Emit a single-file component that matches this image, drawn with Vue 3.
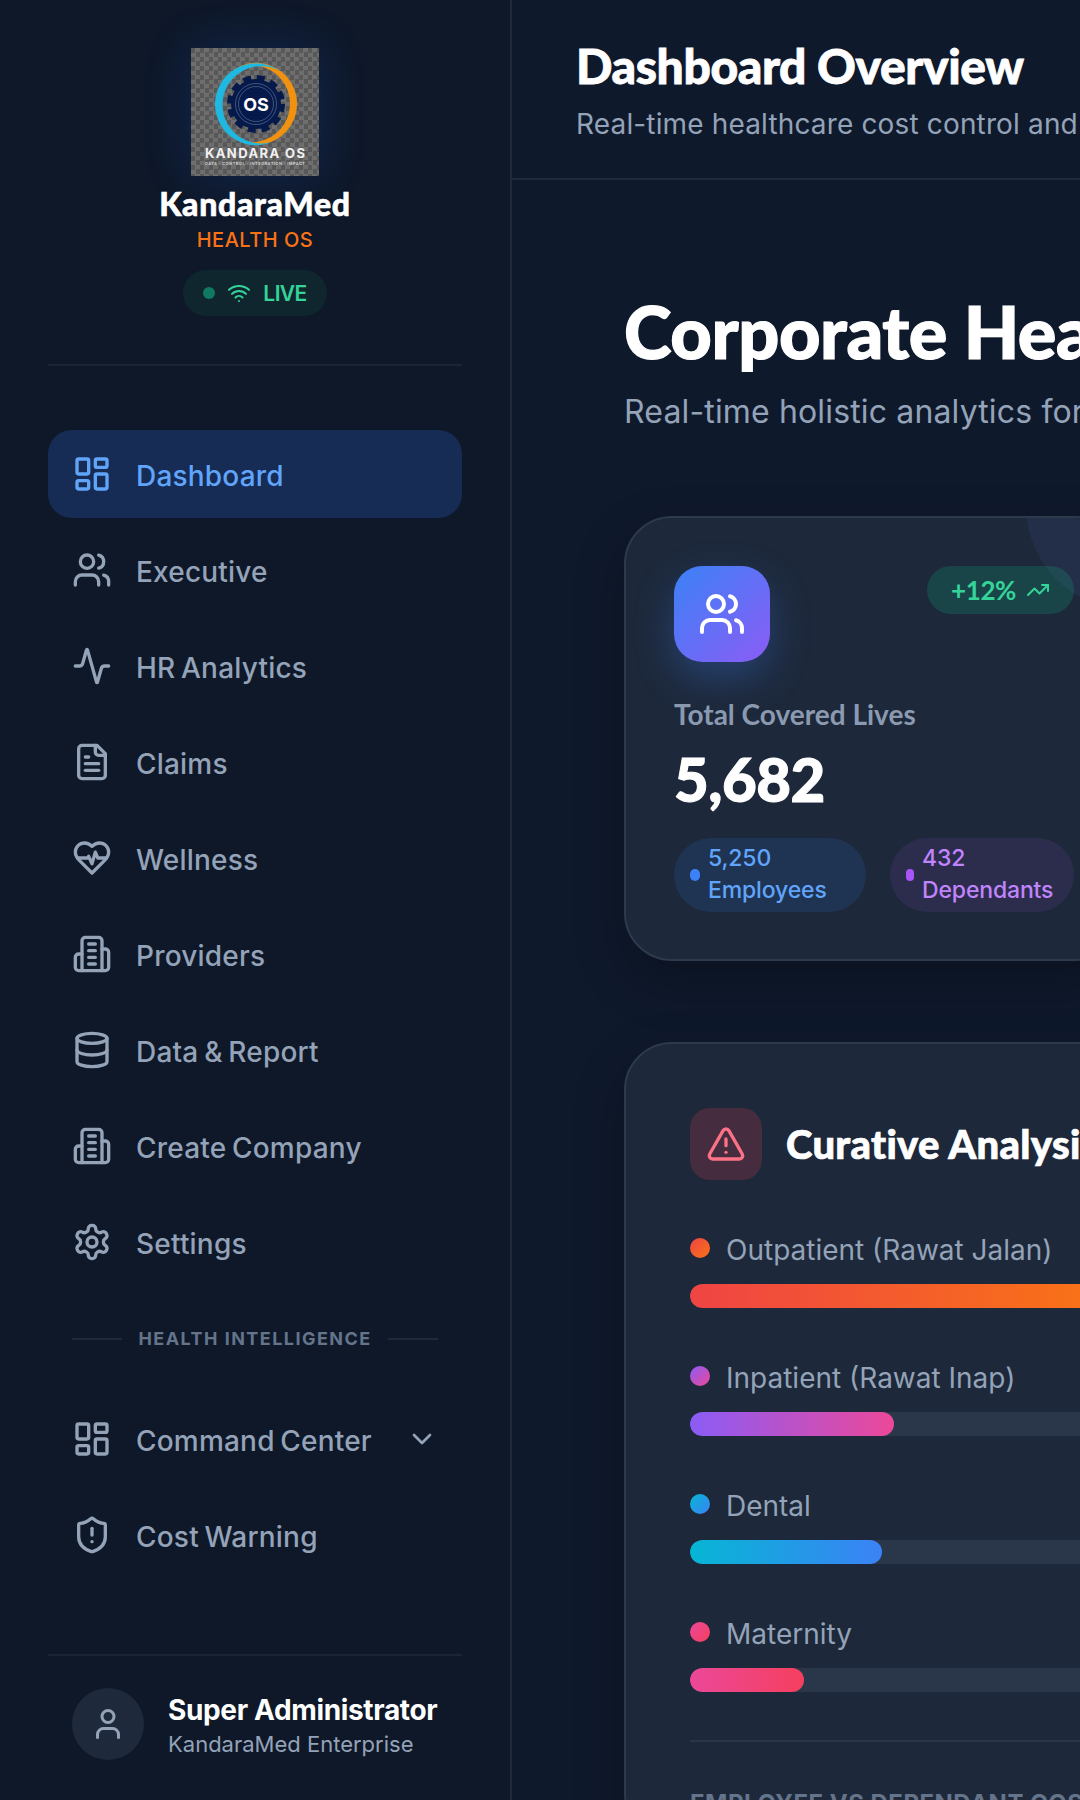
<script setup>
// icon paths, same 24x24 grid for all of them
const icons = {
  dashboard: { rects: [[3, 3, 7, 9], [14, 3, 7, 5], [14, 12, 7, 9], [3, 16, 7, 5]] },
  users: { circles: [[9, 7, 4]], paths: ['M16 21v-2a4 4 0 0 0-4-4H6a4 4 0 0 0-4 4v2', 'M22 21v-2a4 4 0 0 0-3-3.87', 'M16 3.13a4 4 0 0 1 0 7.75'] },
  activity: { paths: ['M22 12h-2.48a2 2 0 0 0-1.93 1.46l-2.35 8.36a.25.25 0 0 1-.48 0L9.24 2.18a.25.25 0 0 0-.48 0l-2.35 8.36A2 2 0 0 1 4.49 12H2'] },
  file: { paths: ['M15 2H6a2 2 0 0 0-2 2v16a2 2 0 0 0 2 2h12a2 2 0 0 0 2-2V7Z', 'M14 2v4a2 2 0 0 0 2 2h4', 'M10 9H8', 'M16 13H8', 'M16 17H8'] },
  heart: { paths: ['M19 14c1.49-1.46 3-3.21 3-5.5A5.5 5.5 0 0 0 16.5 3c-1.76 0-3 .5-4.5 2-1.5-1.5-2.74-2-4.5-2A5.5 5.5 0 0 0 2 8.5c0 2.3 1.5 4.05 3 5.5l7 7Z', 'M3.22 12H9.5l.5-1 2 4.5 2-7 1.5 3.5h5.27'] },
  building: { paths: ['M6 22V4a2 2 0 0 1 2-2h8a2 2 0 0 1 2 2v18Z', 'M6 12H4a2 2 0 0 0-2 2v6a2 2 0 0 0 2 2h2', 'M18 9h2a2 2 0 0 1 2 2v9a2 2 0 0 1-2 2h-2', 'M10 6h4', 'M10 10h4', 'M10 14h4', 'M10 18h4'] },
  database: { paths: ['M3 5a9 3 0 1 0 18 0a9 3 0 1 0-18 0', 'M3 5V19A9 3 0 0 0 21 19V5', 'M3 12A9 3 0 0 0 21 12'] },
  settings: { circles: [[12, 12, 3]], paths: ['M12.22 2h-.44a2 2 0 0 0-2 2v.18a2 2 0 0 1-1 1.73l-.43.25a2 2 0 0 1-2 0l-.15-.08a2 2 0 0 0-2.73.73l-.22.38a2 2 0 0 0 .73 2.73l.15.1a2 2 0 0 1 1 1.72v.51a2 2 0 0 1-1 1.74l-.15.09a2 2 0 0 0-.73 2.73l.22.38a2 2 0 0 0 2.73.73l.15-.08a2 2 0 0 1 2 0l.43.25a2 2 0 0 1 1 1.73V20a2 2 0 0 0 2 2h.44a2 2 0 0 0 2-2v-.18a2 2 0 0 1 1-1.73l.43-.25a2 2 0 0 1 2 0l.15.08a2 2 0 0 0 2.73-.73l.22-.39a2 2 0 0 0-.73-2.73l-.15-.08a2 2 0 0 1-1-1.74v-.5a2 2 0 0 1 1-1.74l.15-.09a2 2 0 0 0 .73-2.73l-.22-.38a2 2 0 0 0-2.73-.73l-.15.08a2 2 0 0 1-2 0l-.43-.25a2 2 0 0 1-1-1.73V4a2 2 0 0 0-2-2z'] },
  shield: { paths: ['M20 13c0 5-3.5 7.5-7.66 8.95a1 1 0 0 1-.67-.01C7.5 20.5 4 18 4 13V6a1 1 0 0 1 1-1c2 0 4.5-1.2 6.24-2.72a1.17 1.17 0 0 1 1.52 0C14.51 3.81 17 5 19 5a1 1 0 0 1 1 1z', 'M12 8v4', 'M12 16h.01'] },
  chevron: { paths: ['m6 9 6 6 6-6'] },
  user: { circles: [[12, 7, 4]], paths: ['M19 21v-2a4 4 0 0 0-4-4H9a4 4 0 0 0-4 4v2'] },
  triangle: { paths: ['m21.73 18-8-14a2 2 0 0 0-3.48 0l-8 14A2 2 0 0 0 4 21h16a2 2 0 0 0 1.73-3', 'M12 9v4', 'M12 17h.01'] },
  trend: { paths: ['M16 7h6v6', 'm22 7-8.5 8.5-5-5L2 17'] },
  wifi: { paths: ['M12 20h.01', 'M2 8.82a15 15 0 0 1 20 0', 'M5 12.859a10 10 0 0 1 14 0', 'M8.5 16.429a5 5 0 0 1 7 0'] },
}

const mainNav = [
  { label: 'Dashboard', icon: 'dashboard', active: true },
  { label: 'Executive', icon: 'users' },
  { label: 'HR Analytics', icon: 'activity' },
  { label: 'Claims', icon: 'file' },
  { label: 'Wellness', icon: 'heart' },
  { label: 'Providers', icon: 'building' },
  { label: 'Data & Report', icon: 'database' },
  { label: 'Create Company', icon: 'building' },
  { label: 'Settings', icon: 'settings' },
]

const intelNav = [
  { label: 'Command Center', icon: 'dashboard', chevron: true },
  { label: 'Cost Warning', icon: 'shield' },
]

// widths are share of the 680px track
const curative = [
  { label: 'Outpatient (Rawat Jalan)', pct: 60, dot: 'linear-gradient(135deg, #ef4444, #f97316)', bar: 'linear-gradient(90deg, #ef4444, #f97316)' },
  { label: 'Inpatient (Rawat Inap)', pct: 30, dot: 'linear-gradient(135deg, #8b5cf6, #ec4899)', bar: 'linear-gradient(90deg, #8b5cf6, #ec4899)' },
  { label: 'Dental', pct: 28.24, dot: 'linear-gradient(135deg, #06b6d4, #3b82f6)', bar: 'linear-gradient(90deg, #06b6d4, #3b82f6)' },
  { label: 'Maternity', pct: 16.76, dot: 'linear-gradient(135deg, #ec4899, #f43f5e)', bar: 'linear-gradient(90deg, #ec4899, #f43f5e)' },
]
</script>

<template>
  <div class="app">
    <aside class="sidebar">
      <div class="brand">
        <div class="logo">
          <svg viewBox="0 0 128 128" width="128" height="128">
            <g transform="translate(1 1)">
              <path d="M41 21A41 41 0 1 1 40 88A38.5 38.5 0 1 0 41 21Z" fill="#f0920f" />
              <path d="M88 22A41 41 0 1 0 80 93A38.7 38.7 0 1 1 88 22Z" fill="#1fb8e0" />
              <circle cx="64" cy="55" r="26.5" fill="none" stroke="#05194a" stroke-width="5" stroke-dasharray="8 5.88" />
              <circle cx="64" cy="55" r="25" fill="#05194a" />
              <circle cx="64" cy="55" r="20.5" fill="none" stroke="#51648a" stroke-width="0.8" />
              <circle cx="64" cy="55" r="17.5" fill="none" stroke="#51648a" stroke-width="0.8" />
              <text x="64" y="61.5" text-anchor="middle" class="logo-os">OS</text>
            </g>
            <text x="64" y="110" text-anchor="middle" textLength="100" class="logo-name">KANDARA OS</text>
            <text x="64" y="117" text-anchor="middle" textLength="100" class="logo-tag">DATA · CONTROL · INTEGRATION · IMPACT</text>
          </svg>
        </div>
        <div class="brand-name">KandaraMed</div>
        <div class="brand-sub">HEALTH OS</div>
        <div class="live-pill">
          <span class="live-dot"></span>
          <svg class="icon" width="24" height="24" viewBox="0 0 24 24">
            <path v-for="d in icons.wifi.paths" :key="d" :d="d" />
          </svg>
          <span>LIVE</span>
        </div>
      </div>

      <nav class="nav">
        <a v-for="item in mainNav" :key="item.label" class="nav-item" :class="{ active: item.active }">
          <svg class="icon" width="40" height="40" viewBox="0 0 24 24">
            <rect v-for="r in icons[item.icon].rects" :key="r.join()" :x="r[0]" :y="r[1]" :width="r[2]" :height="r[3]" rx="1" />
            <circle v-for="c in icons[item.icon].circles" :key="c.join()" :cx="c[0]" :cy="c[1]" :r="c[2]" />
            <path v-for="d in icons[item.icon].paths" :key="d" :d="d" />
          </svg>
          <span class="nav-text">{{ item.label }}</span>
        </a>

        <div class="nav-section">
          <span class="line"></span>
          <span>HEALTH INTELLIGENCE</span>
          <span class="line"></span>
        </div>

        <a v-for="item in intelNav" :key="item.label" class="nav-item">
          <svg class="icon" width="40" height="40" viewBox="0 0 24 24">
            <rect v-for="r in icons[item.icon].rects" :key="r.join()" :x="r[0]" :y="r[1]" :width="r[2]" :height="r[3]" rx="1" />
            <path v-for="d in icons[item.icon].paths" :key="d" :d="d" />
          </svg>
          <span class="nav-text">{{ item.label }}</span>
          <svg v-if="item.chevron" class="icon chevron" width="32" height="32" viewBox="0 0 24 24">
            <path :d="icons.chevron.paths[0]" />
          </svg>
        </a>
      </nav>

      <div class="user">
        <div class="avatar">
          <svg class="icon" width="36" height="36" viewBox="0 0 24 24">
            <circle cx="12" cy="7" r="4" />
            <path :d="icons.user.paths[0]" />
          </svg>
        </div>
        <div class="user-text">
          <div class="user-name">Super Administrator</div>
          <div class="user-org">KandaraMed Enterprise</div>
        </div>
      </div>
    </aside>

    <main class="main">
      <header class="topbar">
        <h1>Dashboard Overview</h1>
        <p>Real-time healthcare cost control and analytics</p>
      </header>

      <section class="content">
        <h2 class="hero-title">Corporate Health Dashboard</h2>
        <p class="hero-sub">Real-time holistic analytics for your corporate health plan</p>

        <div class="card stat-card">
          <span class="corner"></span>
          <div class="stat-top">
            <div class="stat-icon">
              <svg class="icon" width="48" height="48" viewBox="0 0 24 24">
                <circle cx="9" cy="7" r="4" />
                <path v-for="d in icons.users.paths" :key="d" :d="d" />
              </svg>
            </div>
            <div class="trend">
              <span>+12%</span>
              <svg class="icon" width="24" height="24" viewBox="0 0 24 24">
                <path v-for="d in icons.trend.paths" :key="d" :d="d" />
              </svg>
            </div>
          </div>
          <div class="stat-label">Total Covered Lives</div>
          <div class="stat-value">5,682</div>
          <div class="stat-pills">
            <div class="pill pill-blue">
              <span class="pill-dot"></span>
              <span class="pill-text">5,250<br />Employees</span>
            </div>
            <div class="pill pill-purple">
              <span class="pill-dot"></span>
              <span class="pill-text">432<br />Dependants</span>
            </div>
          </div>
        </div>

        <div class="card analysis-card">
          <div class="analysis-head">
            <div class="warn-icon">
              <svg class="icon" width="40" height="40" viewBox="0 0 24 24">
                <path v-for="d in icons.triangle.paths" :key="d" :d="d" />
              </svg>
            </div>
            <h3>Curative Analysis</h3>
          </div>

          <div v-for="row in curative" :key="row.label" class="bar-row">
            <div class="bar-label">
              <span class="bar-dot" :style="{ background: row.dot }"></span>
              <span class="bar-text">{{ row.label }}</span>
            </div>
            <div class="track">
              <div class="fill" :style="{ width: row.pct + '%', background: row.bar }"></div>
            </div>
          </div>

          <div class="split">EMPLOYEE VS DEPENDANT COST</div>
        </div>
      </section>
    </main>
  </div>
</template>

<style>
html, body {
  margin: 0;
  background: #0f172a;
}
</style>

<style scoped>
.app {
  display: flex;
  width: 1080px;
  height: 1800px;
  overflow: hidden;
  font-family: Inter, "Noto Sans", sans-serif;
  color: #94a3b8;
}

.icon {
  fill: none;
  stroke: currentColor;
  stroke-width: 2;
  stroke-linecap: round;
  stroke-linejoin: round;
  flex: none;
}

/* sidebar */
.sidebar {
  flex: 0 0 512px;
  box-sizing: border-box;
  display: flex;
  flex-direction: column;
  background: #0e1829;
  border-right: 2px solid #1e293b;
}

.brand {
  display: flex;
  flex-direction: column;
  align-items: center;
  margin: 0 48px;
  padding: 48px 0;
  border-bottom: 2px solid #1a2435;
}

.logo {
  width: 128px;
  height: 128px;
  background: repeating-conic-gradient(#6e6e6e 0 25%, #585858 0 50%) 0 0 / 9px 9px;
  box-shadow: 0 0 48px rgba(37, 99, 235, 0.2);
}

.logo svg {
  display: block;
}

.logo-os {
  font: 700 18px Inter, sans-serif;
  fill: #fff;
}

.logo-name {
  font: 700 13px Inter, sans-serif;
  fill: #f1f1f1;
}

.logo-tag {
  font: 600 4px Inter, sans-serif;
  fill: #d8d8d8;
}

.brand-name {
  margin-top: 10px;
  font: 900 32px/36px Lato, sans-serif;
  letter-spacing: 0.7px;
  -webkit-text-stroke: 0.6px #fff;
  color: #fff;
}

.brand-sub {
  margin-top: 4px;
  font: 500 20px/28px Inter, sans-serif;
  letter-spacing: 0.5px;
  color: #f97316;
}

.live-pill {
  display: flex;
  align-items: center;
  gap: 12px;
  height: 46px;
  margin-top: 16px;
  padding: 0 20px;
  border-radius: 23px;
  background: #10262e;
  font-size: 21px;
  font-weight: 600;
  letter-spacing: -0.6px;
  color: #34d399;
}

.live-dot {
  width: 12px;
  height: 12px;
  border-radius: 50%;
  background: #10795f;
}

.nav {
  display: flex;
  flex-direction: column;
  gap: 8px;
  margin: 64px 48px 0;
}

.nav-item {
  display: flex;
  align-items: center;
  gap: 24px;
  height: 88px;
  padding: 0 24px;
  border-radius: 24px;
  font-size: 28px;
  font-weight: 500;
  letter-spacing: 0.2px;
  word-spacing: -2px;
  color: #94a3b8;
}

.nav-text {
  padding-top: 4px;
}

.nav-item.active {
  background: #172c54;
  color: #60a5fa;
}

.chevron {
  margin-left: auto;
}

.nav-section {
  display: flex;
  align-items: center;
  justify-content: space-between;
  margin: 33px 24px 36px;
  font-size: 18px;
  line-height: 24px;
  font-weight: 700;
  letter-spacing: 1.45px;
  color: #64748b;
}

.line {
  width: 50px;
  height: 2px;
  background: #1e293b;
}

.user {
  display: flex;
  align-items: center;
  gap: 24px;
  margin: auto 48px 0;
  padding: 32px 24px 40px;
  border-top: 2px solid #1a2435;
  white-space: nowrap;
}

.avatar {
  display: flex;
  align-items: center;
  justify-content: center;
  flex: none;
  width: 72px;
  height: 72px;
  border-radius: 50%;
  background: #1e293b;
}

.user-text {
  padding-top: 4px;
}

.user-name {
  font-size: 28px;
  line-height: 36px;
  font-weight: 700;
  letter-spacing: -0.35px;
  color: #fff;
}

.user-org {
  font-size: 22px;
  line-height: 32px;
  color: #94a3b8;
}

/* main column */
.main {
  flex: 1;
  min-width: 0;
  overflow: hidden;
  background: #0f192c;
  white-space: nowrap;
}

.topbar {
  box-sizing: content-box;
  height: 142px;
  padding: 36px 0 0 64px;
  border-bottom: 2px solid #1e293b;
}

.topbar h1 {
  margin: 0;
  font: 900 48px/60px Lato, sans-serif;
  letter-spacing: -0.4px;
  -webkit-text-stroke: 0.8px #fff;
  color: #fff;
}

.topbar p {
  margin: 8px 0 0;
  font-size: 28px;
  line-height: 40px;
  letter-spacing: 0.15px;
  color: #94a3b8;
}

.content {
  padding: 111px 0 0 112px;
}

.hero-title {
  margin: 0;
  font: 900 72px/80px Lato, sans-serif;
  letter-spacing: -0.4px;
  -webkit-text-stroke: 1.2px #fff;
  color: #fff;
}

.hero-sub {
  margin: 17px 0 0;
  font-size: 32px;
  line-height: 48px;
  letter-spacing: 0.15px;
  color: #94a3b8;
}

.card {
  position: relative;
  box-sizing: border-box;
  overflow: hidden;
  border: 2px solid #2d3a4e;
  border-radius: 48px;
  background: #1d283a;
  box-shadow: 0 20px 50px rgba(0, 0, 0, 0.25);
}

.stat-card {
  width: 500px;
  height: 445px;
  margin-top: 80px;
  padding: 48px;
}

.corner {
  position: absolute;
  left: 400px;
  top: -116px;
  width: 208px;
  height: 208px;
  border-radius: 50%;
  background: #232f48;
}

.stat-top {
  position: relative;
  display: flex;
  align-items: flex-start;
  justify-content: space-between;
}

.stat-icon {
  display: flex;
  align-items: center;
  justify-content: center;
  width: 96px;
  height: 96px;
  border-radius: 28px;
  background: linear-gradient(135deg, #3b82f6, #8b5cf6);
  box-shadow: 0 16px 40px rgba(59, 130, 246, 0.3);
  color: #fff;
}

.trend {
  display: flex;
  align-items: center;
  gap: 10px;
  height: 48px;
  padding: 0 24px;
  border-radius: 24px;
  background: rgba(16, 185, 129, 0.2);
  font: 700 26px Lato, sans-serif;
  letter-spacing: -0.4px;
  color: #34d399;
}

.stat-label {
  margin-top: 34px;
  font: 700 28px/36px Lato, sans-serif;
  color: #8b9ab0;
}

.stat-value {
  margin-top: 11px;
  font: 900 60px/72px Lato, sans-serif;
  letter-spacing: -0.5px;
  -webkit-text-stroke: 1px #fff;
  color: #fff;
}

.stat-pills {
  display: flex;
  gap: 24px;
  margin-top: 23px;
}

.pill {
  box-sizing: border-box;
  display: flex;
  align-items: center;
  gap: 8px;
  height: 74px;
  padding: 0 16px;
  border-radius: 37px;
  font-size: 23px;
  line-height: 32px;
  font-weight: 500;
  letter-spacing: -0.15px;
}

.pill-text {
  padding-bottom: 2px;
}

.pill-blue {
  width: 192px;
  background: #1f3352;
  color: #60a5fa;
}

.pill-purple {
  width: 184px;
  background: #2c2c4d;
  color: #c084fc;
}

.pill-dot {
  flex: none;
  width: 10px;
  height: 12px;
  border-radius: 6px;
  background: #3b82f6;
}

.pill-purple .pill-dot {
  width: 8px;
  background: #a855f7;
}

.analysis-card {
  width: 812px;
  height: 800px;
  margin-top: 81px;
  padding: 64px;
}

.analysis-head {
  display: flex;
  align-items: center;
  gap: 24px;
  margin-bottom: 48px;
}

.analysis-head h3 {
  margin: 0;
  font: 900 40px/48px Lato, sans-serif;
  letter-spacing: 0.3px;
  -webkit-text-stroke: 0.7px #fff;
  color: #fff;
}

.warn-icon {
  display: flex;
  align-items: center;
  justify-content: center;
  width: 72px;
  height: 72px;
  border-radius: 20px;
  background: #452c3e;
  color: #fb7185;
}

.bar-row {
  margin-bottom: 48px;
}

.bar-label {
  display: flex;
  align-items: center;
  gap: 16px;
  height: 40px;
  font-size: 28px;
  line-height: 40px;
  color: #94a3b8;
}

.bar-text {
  padding-top: 3px;
}

.bar-dot {
  width: 20px;
  height: 20px;
  border-radius: 50%;
}

.track {
  height: 24px;
  margin-top: 16px;
  background: #2a374b;
  border-radius: 12px;
  overflow: hidden;
}

.fill {
  height: 100%;
  border-radius: 12px;
}

.split {
  padding-top: 46px;
  border-top: 2px solid #2a3546;
  font-size: 24px;
  line-height: 32px;
  font-weight: 700;
  letter-spacing: 0.5px;
  color: #64748b;
}
</style>
